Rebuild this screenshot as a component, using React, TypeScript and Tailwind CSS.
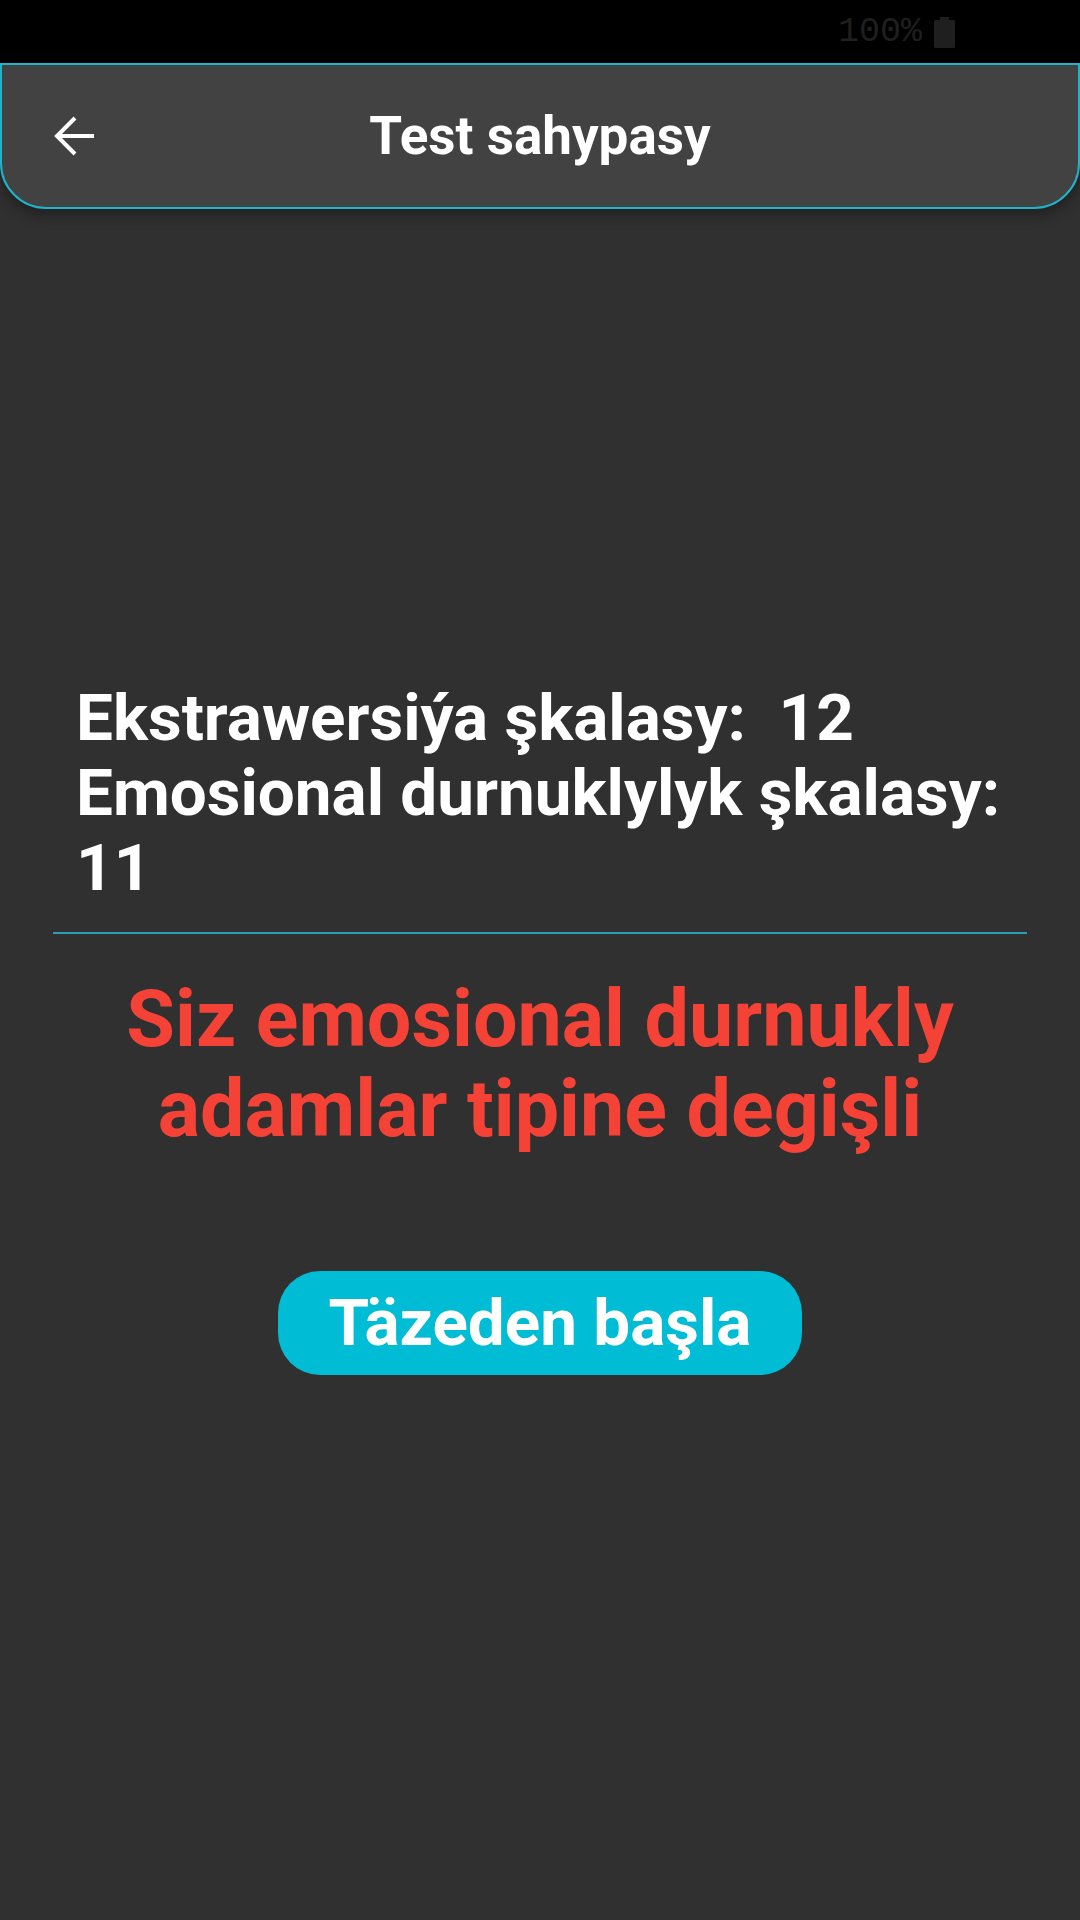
import React from "react";

export default function App() {
  return (
    <div
      className="w-[1080px] h-[1920px] bg-[#303030] flex flex-col overflow-hidden"
      style={{ fontFamily: "Roboto, 'Noto Sans', sans-serif" }}
    >
      {/* Status bar */}
      <div className="h-[63px] bg-black flex items-center justify-end pr-[125px] shrink-0">
        <span
          className="text-[35px] leading-none text-[#1f1f1f] mr-[12px] mt-[2px]"
          style={{ fontFamily: "'Liberation Mono', monospace" }}
        >
          100%
        </span>
        <svg width="21" height="31" viewBox="0 0 21 31" className="mt-[1px]">
          <rect x="6" y="0" width="9" height="3" fill="#1f1f1f" />
          <rect x="0" y="3" width="21" height="28" rx="1.5" fill="#1f1f1f" />
        </svg>
      </div>

      {/* Header */}
      <div className="relative z-10 h-[146px] bg-[#424242] border-2 border-[#1fb4ca] rounded-b-[46px] shadow-[0_6px_14px_rgba(0,0,0,0.35)] flex items-center shrink-0 px-[51px]">
        <svg width="42" height="42" viewBox="0 0 42 42" className="shrink-0">
          <path d="M41 21 H5" stroke="white" strokeWidth="4" fill="none" />
          <path d="M22 3 L4 21 L22 39" stroke="white" strokeWidth="4" fill="none" strokeLinejoin="miter" />
        </svg>
        <div className="absolute inset-0 flex items-center justify-center pointer-events-none">
          <span className="text-white font-bold text-[53px] leading-none">Test sahypasy</span>
        </div>
      </div>

      {/* Content */}
      <div className="flex flex-col flex-1">
        <div className="mt-[471px] pl-[76px] pr-[40px] text-white font-bold text-[65.6px] leading-[75px] whitespace-pre">
          <div>{"Ekstrawersiýa şkalasy:  12"}</div>
          <div>{"Emosional durnuklylyk şkalasy:"}</div>
          <div>11</div>
        </div>
        <div className="mt-[27px] mx-[53px] h-[2px] bg-[#2a9fb1]" />
        <div className="mt-[40px] text-center text-[#f44336] font-bold text-[79px] leading-[90px]">
          <div>Siz emosional durnukly</div>
          <div>adamlar tipine degişli</div>
        </div>
        <div className="mt-[117px] flex justify-center">
          <div className="w-[524px] h-[104px] rounded-[42px] bg-[#00bcd4] flex items-center justify-center">
            <span className="text-white font-bold text-[65.6px] leading-none">Täzeden başla</span>
          </div>
        </div>
      </div>
    </div>
  );
}
